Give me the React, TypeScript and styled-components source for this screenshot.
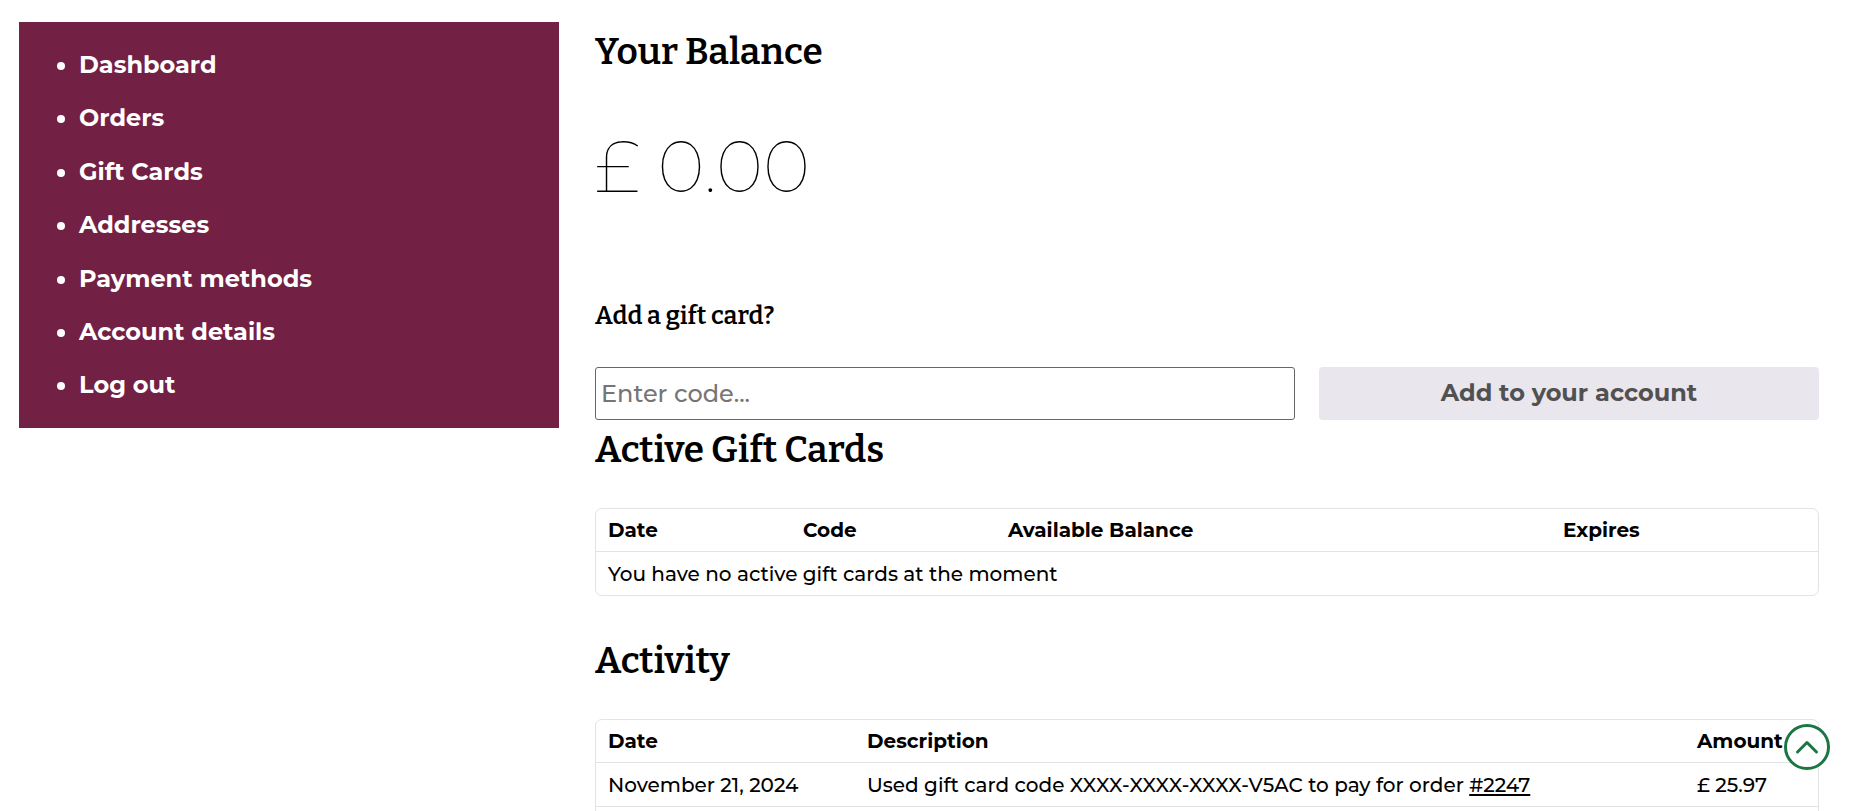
import React from "react";
import styled, { createGlobalStyle } from "styled-components";

const sans = `Montserrat, Inter, "Liberation Sans", sans-serif`;
const slab = `"Roboto Slab", Bitter, "DejaVu Serif Condensed", "DejaVu Serif", serif`;

const GlobalStyle = createGlobalStyle`
  *, *::before, *::after { box-sizing: border-box; }
  body {
    margin: 0;
    background: #fff;
    color: #000;
    font-family: ${sans};
    font-size: 20px;
    line-height: 30px;
    font-weight: 500;
  }
`;

const Page = styled.div`
  display: grid;
  grid-template-columns: 30% 68%;
  justify-content: space-between;
  align-items: start;
  height: 100vh;
  padding: 22px 35px 0 19px;
  overflow-y: auto;
  scrollbar-width: none;
`;

const Sidebar = styled.nav`
  background: #722043;
  color: #fff;
  padding: 24px 24px 23px;
`;

const NavList = styled.ul`
  display: grid;
  gap: 15px;
  margin: 0;
  padding: 0 0 0 36px;
  font-size: 24px;
  line-height: 1.6;
  font-weight: 700;
`;

const NavLink = styled.a`
  color: inherit;
  text-decoration: none;
`;

const Content = styled.main`
  min-width: 0;
`;

const Title = styled.h2`
  margin: 0 0 28px;
  font-family: ${slab};
  font-size: 37px;
  line-height: 60px;
  font-weight: 600;
`;

const Balance = styled.p`
  margin: 0 0 76px;
  font-size: 72px;
  line-height: 112px;
  font-weight: 100;
`;

const Subtitle = styled.label`
  display: block;
  margin: 0 0 33px;
  font-family: ${slab};
  font-size: 25px;
  line-height: 36px;
  font-weight: 600;
`;

const RedeemForm = styled.form`
  display: grid;
  grid-template-columns: 7fr 5fr;
  gap: 24px;
  height: 53px;
`;

const CodeInput = styled.input`
  min-width: 0;
  padding: 0 5px;
  border: 1px solid #666;
  border-radius: 3px;
  background: #fff;
  color: #000;
  font: 500 24px ${sans};
  &::placeholder { color: #757575; opacity: 1; }
`;

const SubmitButton = styled.button`
  padding: 0 0 2px;
  border: 0;
  border-radius: 4px;
  background: #e9e6ed;
  color: #515151;
  font: 700 24px ${sans};
  cursor: pointer;
`;

const Section = styled.section<{ $gap: number }>`
  padding-top: ${(p) => p.$gap}px;
`;

const DataTable = styled.table`
  width: 100%;
  table-layout: fixed;
  border: 1px solid #e3e3e3;
  border-radius: 7px;
  border-collapse: separate;
  border-spacing: 0;
`;

const Th = styled.th`
  padding: 6px 12px;
  text-align: left;
  font-weight: 700;
`;

const Td = styled.td`
  height: 44px;
  padding: 6px 12px;
  border-top: 1px solid #e3e3e3;
`;

const Col = styled.col<{ $w?: number }>`
  width: ${(p) => (p.$w ? `${p.$w}px` : "auto")};
`;

const OrderLink = styled.a`
  color: inherit;
  text-decoration: underline;
  text-decoration-thickness: 2px;
  text-underline-offset: 2px;
`;

const TopButton = styled.button`
  position: fixed;
  right: 24px;
  bottom: 41px;
  display: grid;
  place-items: center;
  width: 46px;
  height: 46px;
  padding: 0;
  border: 3px solid #1b7644;
  border-radius: 50%;
  background: #fff;
  color: #1b7644;
  cursor: pointer;
`;

const links = ["Dashboard", "Orders", "Gift Cards", "Addresses", "Payment methods", "Account details", "Log out"];

export default function App() {
  return (
    <>
      <GlobalStyle />
      <Page>
        <Sidebar aria-label="Account">
          <NavList>
            {links.map((label) => (
              <li key={label}>
                <NavLink href="#">{label}</NavLink>
              </li>
            ))}
          </NavList>
        </Sidebar>
        <Content>
          <Title>Your Balance</Title>
          <Balance>£ 0.00</Balance>
          <Subtitle htmlFor="code">Add a gift card?</Subtitle>
          <RedeemForm onSubmit={(e) => e.preventDefault()}>
            <CodeInput id="code" type="text" placeholder="Enter code..." />
            <SubmitButton type="submit">Add to your account</SubmitButton>
          </RedeemForm>
          <Section $gap={0}>
            <Title>Active Gift Cards</Title>
            <DataTable>
              <colgroup>
                <Col $w={195} />
                <Col $w={205} />
                <Col />
                <Col $w={267} />
              </colgroup>
              <thead>
                <tr>
                  <Th scope="col">Date</Th>
                  <Th scope="col">Code</Th>
                  <Th scope="col">Available Balance</Th>
                  <Th scope="col">Expires</Th>
                </tr>
              </thead>
              <tbody>
                <tr>
                  <Td colSpan={4}>You have no active gift cards at the moment</Td>
                </tr>
              </tbody>
            </DataTable>
          </Section>
          <Section $gap={35}>
            <Title>Activity</Title>
            <DataTable>
              <colgroup>
                <Col $w={259} />
                <Col />
                <Col $w={133} />
              </colgroup>
              <thead>
                <tr>
                  <Th scope="col">Date</Th>
                  <Th scope="col">Description</Th>
                  <Th scope="col">Amount</Th>
                </tr>
              </thead>
              <tbody>
                <tr>
                  <Td>November 21, 2024</Td>
                  <Td>
                    Used gift card code XXXX-XXXX-XXXX-V5AC to pay for order <OrderLink href="#">#2247</OrderLink>
                  </Td>
                  <Td>£ 25.97</Td>
                </tr>
                <tr>
                  <Td colSpan={3} />
                </tr>
              </tbody>
            </DataTable>
          </Section>
        </Content>
      </Page>
      <TopButton type="button" aria-label="Back to top">
        <svg width="24" height="16" viewBox="0 0 24 16" fill="none" stroke="currentColor" strokeWidth="3" strokeLinecap="round" strokeLinejoin="round">
          <path d="M2.5 13 12 3.5 21.5 13" />
        </svg>
      </TopButton>
    </>
  );
}
